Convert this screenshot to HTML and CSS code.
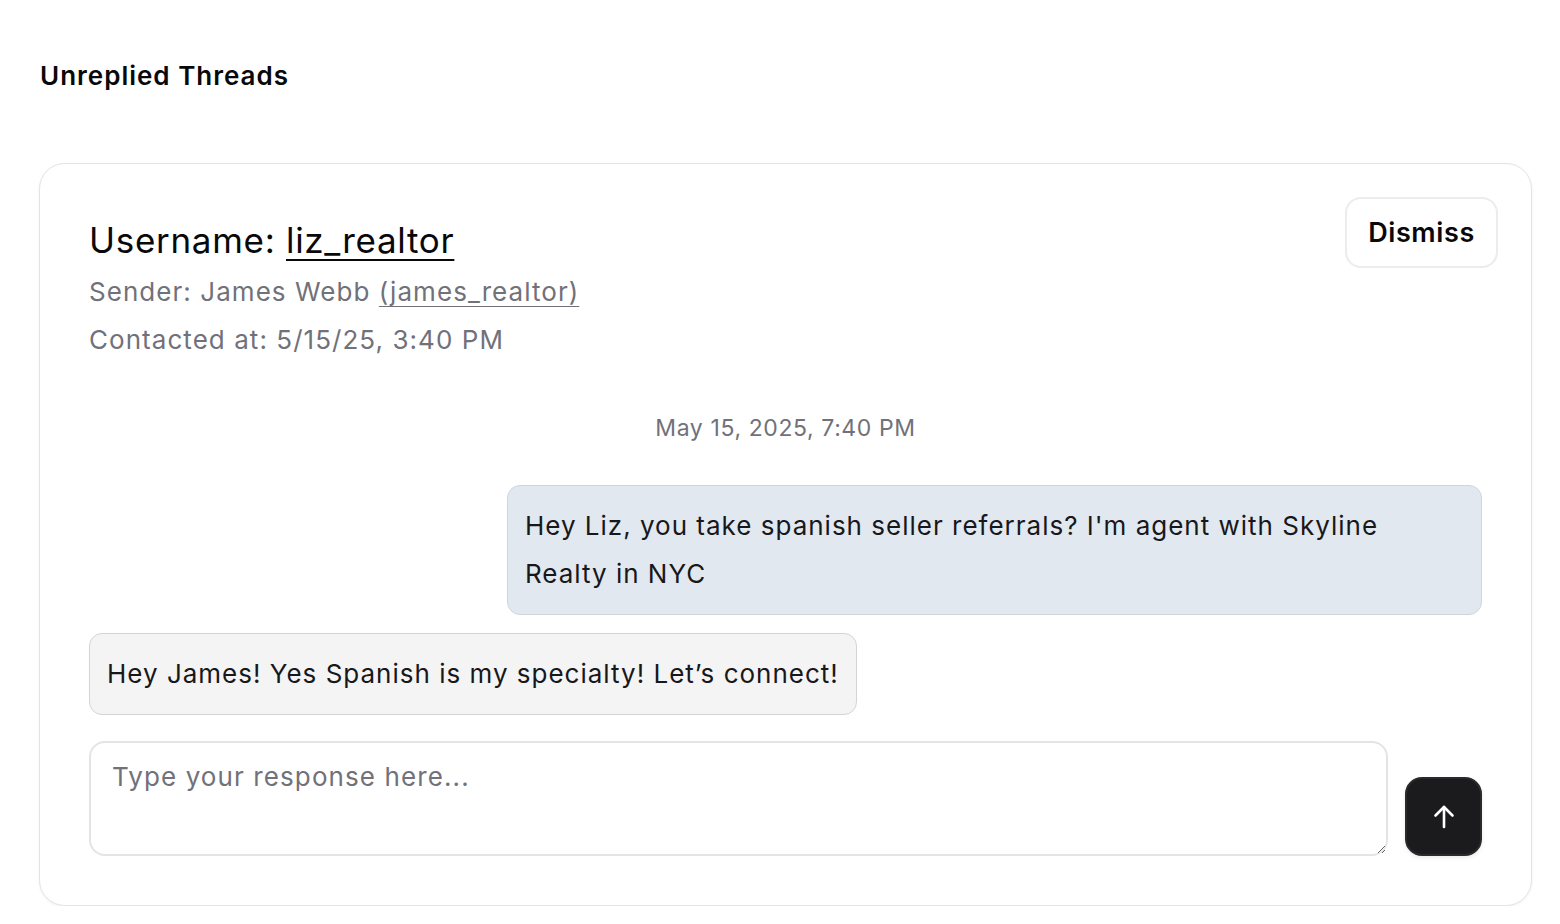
FILE: index.html
```html
<!DOCTYPE html>
<html lang="en">
<head>
<meta charset="utf-8">
<title>Unreplied Threads</title>
<link rel="stylesheet" href="styles.css">
</head>
<body>
<main class="page">
  <h2 class="page-title">Unreplied Threads</h2>
  <section class="card">
    <button class="dismiss" type="button">Dismiss</button>
    <header class="thread-head">
      <div class="username">Username: <a href="#">liz_realtor</a></div>
      <div class="meta">Sender: James Webb <a href="#">(james_realtor)</a></div>
      <div class="meta">Contacted at: 5/15/25, 3:40 PM</div>
    </header>
    <div class="stamp">May 15, 2025, 7:40 PM</div>
    <div class="messages">
      <div class="bubble outgoing">Hey Liz, you take spanish seller referrals? I'm agent with Skyline Realty in NYC</div>
      <div class="bubble incoming">Hey James! Yes Spanish is my specialty! Let’s connect!</div>
    </div>
    <form class="composer">
      <textarea class="reply" placeholder="Type your response here..."></textarea>
      <button class="send" type="button" aria-label="Send">
        <svg width="24" height="26" viewBox="0 0 24 26" fill="none" stroke="currentColor" stroke-width="2.6" stroke-linecap="round" stroke-linejoin="round"><path d="M12 23V3"/><path d="M3.5 11.5 12 3l8.5 8.5"/></svg>
      </button>
    </form>
  </section>
</main>
</body>
</html>
```

FILE: styles.css
```css
* { box-sizing: border-box; }
html, body { margin: 0; background: #ffffff; }
body {
  font-family: Inter, "Noto Sans", "Liberation Sans", sans-serif;
  color: #09090b;
}
.page {
  padding: 58px 28px 0 39px;
}
.page-title {
  margin: 0 0 0 1px;
  font-size: 26px;
  line-height: 36px;
  font-weight: 600;
  letter-spacing: 1px;
  color: #09090b;
}
.card {
  position: relative;
  margin-top: 69px;
  border: 1px solid #e4e4e7;
  border-radius: 26px;
  background: #fff;
  box-shadow: 0 1px 3px rgba(0,0,0,0.06);
  padding: 48px 49px 49px 49px;
}
.dismiss {
  position: absolute;
  top: 33px;
  right: 33px;
  width: 153px;
  height: 71px;
  border: 2px solid #ececef;
  border-radius: 16px;
  background: #fff;
  font-family: inherit;
  font-size: 27px;
  font-weight: 600;
  letter-spacing: 0.6px;
  color: #09090b;
  cursor: pointer;
}
.thread-head { display: flex; flex-direction: column; }
.username {
  font-size: 35px;
  line-height: 56px;
  font-weight: 400;
  letter-spacing: 0.7px;
  color: #09090b;
}
.username a { color: inherit; text-decoration: underline; text-underline-offset: 6px; text-decoration-thickness: 2px; }
.meta {
  font-size: 26px;
  line-height: 48px;
  letter-spacing: 1.05px;
  color: #71717a;
}
.meta a { color: inherit; text-decoration: underline; text-underline-offset: 5px; text-decoration-thickness: 1px; }
.stamp {
  margin-top: 48px;
  text-align: center;
  font-size: 23px;
  line-height: 32px;
  letter-spacing: 0.6px;
  color: #71717a;
}
.messages {
  margin-top: 41px;
  display: flex;
  flex-direction: column;
  gap: 18px;
}
.bubble {
  max-width: 70%;
  padding: 16px 17px;
  font-size: 26px;
  line-height: 48px;
  letter-spacing: 1px;
  border-radius: 13px;
  color: #18181b;
}
.outgoing {
  align-self: flex-end;
  width: 70%;
  background: #e2e8f0;
  border: 1.5px solid #cfd5de;
}
.incoming {
  align-self: flex-start;
  background: #f4f4f5;
  border: 1.5px solid #d4d4d8;
}
.composer {
  margin: 26px 0 0;
  display: flex;
  align-items: flex-end;
  gap: 17px;
}
.reply {
  flex: 1;
  height: 115px;
  padding: 16px 21px;
  border: 2px solid #e4e4e7;
  border-radius: 16px;
  font-family: inherit;
  font-size: 26px;
  line-height: 36px;
  letter-spacing: 1.1px;
  color: #09090b;
  resize: vertical;
  outline: none;
}
.reply::placeholder { color: #71717a; }
.send {
  flex: none;
  width: 77px;
  height: 79px;
  border: 2px solid #2a2a2d;
  border-radius: 17px;
  background: #1b1b1d;
  color: #fff;
  display: flex;
  align-items: center;
  justify-content: center;
  box-shadow: 0 2px 4px rgba(0,0,0,0.08);
  cursor: pointer;
}
```
